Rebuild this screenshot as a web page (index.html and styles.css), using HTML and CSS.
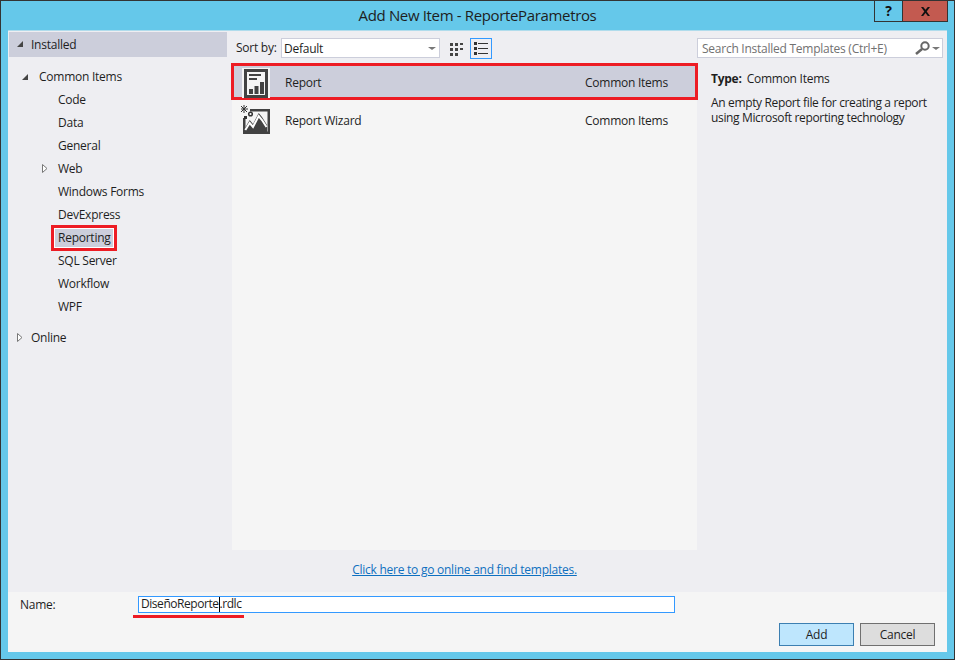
FILE: index.html
```html
<!DOCTYPE html>
<html lang="en">
<head>
    <meta charset="UTF-8">
    <title>Add New Item - ReporteParametros</title>
    <link rel="stylesheet" href="styles.css">
</head>
<body>
    <div class="window">
        <div class="titlebar">
            <div class="title">Add New Item - ReporteParametros</div>
            <div class="window-buttons">
                <div class="win-btn help">?</div>
                <div class="win-btn close">
                    <svg width="11" height="9" viewBox="0 0 11 9"><path d="M1 0h2.2l2.3 2.8L7.800 0H10L6.700 4.400 10 9H7.800L5.500 6 3.200 9H1l3.300-4.600z" fill="#111"/></svg>
                </div>
            </div>
        </div>

        <div class="content">
            <div class="main">
                <div class="tree">
                    <div class="tree-root selected">
                        <svg class="arrow" width="8" height="8" viewBox="0 0 8 8"><path d="M7 1v6H1z" fill="#444"/></svg>
                        Installed
                    </div>
                    <div class="tree-group">
                        <svg class="arrow" width="8" height="8" viewBox="0 0 8 8"><path d="M7 1v6H1z" fill="#444"/></svg>
                        Common Items
                    </div>
                    <div class="tree-item">Code</div>
                    <div class="tree-item">Data</div>
                    <div class="tree-item">General</div>
                    <div class="tree-item">
                        <svg class="arrow-closed" width="6" height="9" viewBox="0 0 6 9"><path d="M.5.500l4.500 4-4.500 4z" fill="#fff" stroke="#777"/></svg>
                        Web
                    </div>
                    <div class="tree-item">Windows Forms</div>
                    <div class="tree-item">DevExpress</div>
                    <div class="tree-item"><span class="reporting">Reporting</span></div>
                    <div class="tree-item">SQL Server</div>
                    <div class="tree-item">Workflow</div>
                    <div class="tree-item">WPF</div>
                    <div class="tree-root online">
                        <svg class="arrow-closed" width="6" height="9" viewBox="0 0 6 9"><path d="M.5.500l4.500 4-4.500 4z" fill="#fff" stroke="#777"/></svg>
                        Online
                    </div>
                </div>

                <div class="center">
                    <div class="toolbar">
                        <span class="sort-label">Sort by:</span>
                        <div class="combo">
                            <span>Default</span>
                            <span class="combo-arrow"></span>
                        </div>
                        <div class="view-btn">
                            <svg width="14" height="14" viewBox="0 0 14 14" fill="#444">
                                <path d="M0 1h3v3H0zM5 1h3v3H5zM10 1h3v2h-3zM0 6h3v3H0zM5 6h3v3H5zM10 6h3v2h-3zM0 11h3v3H0zM5 11h3v3H5z"/>
                            </svg>
                        </div>
                        <div class="view-btn active">
                            <svg width="14" height="14" viewBox="0 0 14 14" fill="#333">
                                <path d="M0 0h3v3H0zM4 1h10v1H4zM0 5h3v3H0zM4 6h10v1H4zM0 10h3v3H0zM4 11h10v1H4z"/>
                            </svg>
                        </div>
                    </div>

                    <div class="list">
                        <div class="list-row selected-row">
                            <div class="list-icon report-icon">
                                <svg width="28" height="30" viewBox="0 0 28 30">
                                    <rect x="3.500" y="2.500" width="21" height="26" fill="none" stroke="#424242" stroke-width="3"/>
                                    <path d="M7 6h12v2H7zM7 10h8v2H7zM7 21h4v5H7zM12.500 18h4v8h-4zM18 14h4v12h-4z" fill="#424242"/>
                                </svg>
                            </div>
                            <span class="list-name">Report</span>
                            <span class="list-cat">Common Items</span>
                        </div>
                        <div class="list-row">
                            <div class="list-icon">
                                <svg width="30" height="30" viewBox="0 0 30 30">
                                    <path d="M9 5.250H27.750V27.750H3.250V13" fill="none" stroke="#424242" stroke-width="2.500"/>
                                    <path d="M4 23L8.700 15 12 19 17.700 8 21 12 26 20V27H4z" fill="#424242"/>
                                    <path d="M4.300 25L8.700 18 12 22 17.700 11 21 15 25.500 22" fill="none" stroke="#fff" stroke-width="2"/>
                                    <path d="M3 0v8M-1 4h8M0 1l6 6M6 1L0 7" stroke="#333" stroke-width="1"/>
                                    <circle cx="9.500" cy="9" r="1.800" fill="#fff" stroke="#333" stroke-width="1.500"/>
                                    <path d="M3 11h3v3H3z" fill="#333"/>
                                </svg>
                            </div>
                            <span class="list-name">Report Wizard</span>
                            <span class="list-cat">Common Items</span>
                        </div>
                    </div>

                    <div class="online-link"><a href="#">Click here to go online and find templates.</a></div>
                </div>

                <div class="details">
                    <div class="search">
                        <span class="search-hint">Search Installed Templates (Ctrl+E)</span>
                        <svg width="16" height="14" viewBox="0 0 16 14">
                            <circle cx="11" cy="5" r="3.700" fill="none" stroke="#666" stroke-width="2"/>
                            <path d="M8 8l-6 5" stroke="#666" stroke-width="2.500"/>
                        </svg>
                        <span class="combo-arrow"></span>
                    </div>
                    <div class="type-line"><b>Type:</b><span>Common Items</span></div>
                    <p class="description">An empty Report file for creating a report using Microsoft reporting technology</p>
                </div>
            </div>

            <div class="bottom">
                <div class="name-row">
                    <label class="name-label">Name:</label>
                    <div class="name-input">DiseñoReporte<span class="caret"></span>.rdlc</div>
                </div>
                <div class="name-mark"></div>
                <div class="buttons">
                    <div class="btn default">Add</div>
                    <div class="btn">Cancel</div>
                </div>
            </div>
        </div>
    </div>
</body>
</html>
```

FILE: styles.css
```css
:root {
    --frame: #65c8ea;
    --panel: #eeeef2;
    --light: #f5f5f5;
    --select: #cccedb;
    --red: #ed1c24;
    --blue: #3399ff;
    --text: #1e1e1e;
}

* {
    margin: 0;
    padding: 0;
    box-sizing: border-box;
}

body {
    font-family: "Open Sans", "Noto Sans", sans-serif;
    font-size: 12px;
    letter-spacing: -0.25px;
    color: var(--text);
    overflow: hidden;
}

.window {
    width: 955px;
    height: 660px;
    display: flex;
    flex-direction: column;
    background: var(--frame);
    border: 1px solid #333;
    padding: 0 7px 7px;
}

.titlebar {
    height: 30px;
    flex: none;
    position: relative;
    text-align: center;
    line-height: 28px;
    font-size: 15px;
}

.title {
    letter-spacing: -0.35px;
}

.window-buttons {
    position: absolute;
    top: 0;
    right: -1px;
    display: flex;
    height: 21px;
}

.win-btn {
    height: 21px;
    display: flex;
    align-items: center;
    justify-content: center;
    border: 1px solid #333;
    border-top: none;
    font-weight: bold;
    font-size: 14px;
    line-height: 1;
    color: #111;
}

.help {
    width: 29px;
}

.close {
    width: 46px;
    margin-left: -1px;
    background: #c35a50;
}

.content {
    flex: 1;
    display: flex;
    flex-direction: column;
    background: var(--panel);
    box-shadow: 0 -1px 0 #b0dcec;
    min-height: 0;
}

.main {
    flex: 1;
    display: grid;
    grid-template-columns: 224px 465px 250px;
    min-height: 0;
}

.tree {
    padding: 1px 5px 0 1px;
}

.tree-root {
    height: 25px;
    line-height: 25px;
    padding-left: 22px;
    position: relative;
}

.selected {
    background: var(--select);
}

.arrow {
    position: absolute;
    left: 7px;
    top: 8px;
}

.tree-group {
    height: 23px;
    line-height: 23px;
    margin-top: 8px;
    padding-left: 30px;
    position: relative;
}

.tree-group .arrow {
    left: 12px;
}

.tree-item {
    height: 23px;
    line-height: 23px;
    padding-left: 49px;
    position: relative;
}

.arrow-closed {
    position: absolute;
    left: 33px;
    top: 7px;
}

.online {
    height: 23px;
    line-height: 23px;
    margin-top: 8px;
}

.online .arrow-closed {
    left: 8px;
}

.reporting {
    display: inline-block;
    height: 26px;
    line-height: 20px;
    margin-left: -7px;
    padding: 0 3px 0 4px;
    background: var(--select);
    border: 3px solid var(--red);
    box-shadow: inset 0 0 0 1px #fff;
    position: relative;
    top: -1px;
}

.center {
    display: flex;
    flex-direction: column;
}

.toolbar {
    height: 32px;
    flex: none;
    display: flex;
    align-items: flex-start;
    padding-top: 7px;
    padding-left: 4px;
}

.sort-label {
    width: 45px;
    line-height: 20px;
}

.combo {
    width: 159px;
    height: 20px;
    display: flex;
    align-items: center;
    justify-content: space-between;
    background: #fff;
    border: 1px solid var(--select);
    padding: 0 3px 0 2px;
}

.combo-arrow {
    width: 0;
    height: 0;
    border-left: 4px solid transparent;
    border-right: 4px solid transparent;
    border-top: 3px solid #777;
}

.view-btn {
    width: 21px;
    height: 21px;
    margin-left: 6px;
    display: flex;
    align-items: center;
    justify-content: center;
}

.active {
    width: 22px;
    margin-left: 3px;
    border: 1px solid var(--blue);
}

.list {
    flex: 1;
    background: var(--light);
}

.list-row {
    display: flex;
    align-items: center;
    height: 38px;
    padding-left: 9px;
}

.selected-row {
    height: 37px;
    margin: 0 -1px 1px;
    padding: 2px 0 0 8px;
    background: var(--select);
    border: 3px solid var(--red);
}

.list-icon {
    width: 30px;
    height: 30px;
}

.report-icon {
    background: var(--light);
    width: 28px;
    margin-right: 1px;
}

.list-name {
    width: 300px;
    margin-left: 14px;
}

.list-cat {
    flex: 1;
}

.online-link {
    height: 42px;
    flex: none;
    display: flex;
    align-items: center;
    justify-content: center;
    padding-bottom: 4px;
}

.online-link a {
    color: #0e70c0;
}

.details {
    padding: 7px 4px 0 0;
}

.search {
    height: 20px;
    display: flex;
    align-items: center;
    background: #fff;
    border: 1px solid var(--select);
    padding: 0 2px 0 4px;
    gap: 2px;
}

.search-hint {
    flex: 1;
    color: #717171;
}

.type-line {
    margin: 13px 0 0 14px;
    display: flex;
    gap: 5px;
    line-height: 16px;
}

.description {
    margin: 8px 0 0 14px;
    width: 230px;
    line-height: 15px;
    letter-spacing: -0.35px;
}

.bottom {
    height: 60px;
    flex: none;
    position: relative;
    background: var(--light);
}

.name-row {
    display: flex;
    padding-top: 4px;
}

.name-label {
    width: 130px;
    padding-left: 12px;
    line-height: 17px;
}

.name-input {
    width: 537px;
    height: 17px;
    line-height: 14px;
    padding-left: 2px;
    letter-spacing: -0.45px;
    background: #fff;
    border: 1px solid var(--blue);
}

.caret {
    display: inline-block;
    width: 1px;
    height: 15px;
    background: #000;
    vertical-align: top;
}

.name-mark {
    position: absolute;
    left: 125px;
    top: 23px;
    width: 111px;
    height: 3px;
    background: var(--red);
}

.buttons {
    display: flex;
    justify-content: flex-end;
    gap: 6px;
    padding: 10px 12px 0 0;
}

.btn {
    width: 75px;
    height: 23px;
    line-height: 21px;
    text-align: center;
    background: #dddddd;
    border: 1px solid #707070;
}

.default {
    background: #bee6fd;
    border-color: #3c7fb1;
}
```
